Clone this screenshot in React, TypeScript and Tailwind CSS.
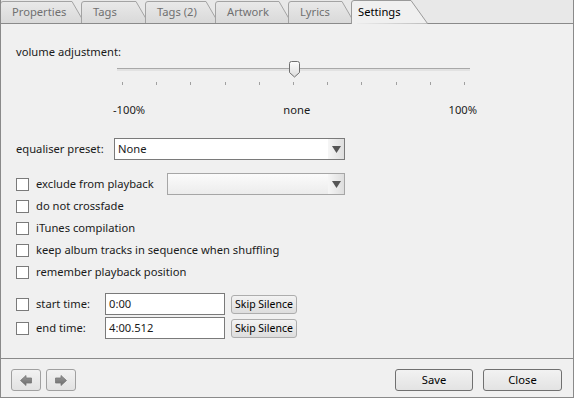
import React from 'react';

const tabs = [
  { label: 'Properties', w: 81 },
  { label: 'Tags', w: 64 },
  { label: 'Tags (2)', w: 70 },
  { label: 'Artwork', w: 73 },
  { label: 'Lyrics', w: 63 },
];

const Tab: React.FC<{ label: string; w: number }> = ({ label, w }) => (
  <div className="relative h-[23px] shrink-0" style={{ width: w }}>
    <svg className="absolute left-0 top-0 overflow-visible" width={w + 4} height={23}>
      <defs>
        <linearGradient id="tabg" x1="0" y1="0" x2="0" y2="1">
          <stop offset="0" stopColor="#e9e9e9" />
          <stop offset="1" stopColor="#d9d9d9" />
        </linearGradient>
      </defs>
      <path
        d={`M0.5,23 V4 Q0.5,1.5 3,1.5 H${w - 9} L${w + 3.5},23`}
        fill="url(#tabg)"
        stroke="#a3a3a3"
      />
    </svg>
    <span className="relative block pl-[12px] pt-[4px] leading-[16px] text-[#707070] whitespace-nowrap">{label}</span>
  </div>
);

const Checkbox = () => (
  <span className="w-[13px] h-[13px] shrink-0 bg-white border border-[#7a7a7a]" />
);

const DropArrow = () => (
  <span className="w-[16px] self-stretch flex items-center justify-center bg-gradient-to-r from-[#f6f6f6] to-[#dedede]">
    <svg width="9" height="7" viewBox="0 0 9 7">
      <path d="M0,0 H9 L4.5,7 Z" fill="#555" />
    </svg>
  </span>
);

const SkipButton = () => (
  <button className="h-[19px] w-[66px] rounded-[3px] border border-[#adadad] bg-gradient-to-b from-[#f3f3f3] to-[#dddddd] text-[10.5px] leading-[15px] text-black whitespace-nowrap">
    Skip Silence
  </button>
);

const ArrowBtn: React.FC<{ dir: 'left' | 'right' }> = ({ dir }) => (
  <button className="w-[30px] h-[22px] rounded-[3px] border border-[#a0a0a0] bg-gradient-to-b from-[#f2f2f2] to-[#e2e2e2] flex items-center justify-center">
    <svg width="12" height="11" viewBox="0 0 12 11" style={{ transform: dir === 'right' ? 'scaleX(-1)' : undefined }}>
      <defs>
        <linearGradient id="arr" x1="0" y1="0" x2="0" y2="1">
          <stop offset="0" stopColor="#9a9a9a" />
          <stop offset="1" stopColor="#6a6a6a" />
        </linearGradient>
      </defs>
      <path d="M0.5,5.5 L6,0.5 V3 H11.5 V8 H6 V10.5 Z" fill="url(#arr)" stroke="#777" strokeWidth="0.8" />
    </svg>
  </button>
);

export default function App() {
  const ticks = Array.from({ length: 11 });
  return (
    <div
      className="w-[574px] h-[398px] bg-[#f0f0f0] flex flex-col text-[11.2px] text-[#1a1a1a] border-l border-r border-b border-[#8a8a8a] overflow-hidden"
      style={{ fontFamily: '"Segoe UI", "Noto Sans", sans-serif' }}
    >
      {/* tab strip */}
      <div className="h-[23px] flex items-end bg-[#e8e8e8] -ml-px">
        {tabs.map(t => (
          <Tab key={t.label} {...t} />
        ))}
        <div className="relative h-[24px] w-[62px] -mb-px z-10 shrink-0">
          <svg className="absolute left-0 top-0 overflow-visible" width={77} height={24}>
            <path d="M0.5,24 V3 Q0.5,0.5 3,0.5 H60 L76.5,23.5" fill="#f0f0f0" stroke="#9a9a9a" />
          </svg>
          <span className="relative block pl-[7px] pt-[4px] leading-[16px] text-black">Settings</span>
        </div>
      </div>

      {/* settings panel */}
      <div className="flex-1 border-t border-b border-[#8a8a8a] pl-[15px] pt-[20px] flex flex-col">
        <div className="leading-[16px]">volume adjustment:</div>

        <div className="relative ml-[101px] w-[353px] h-[26px]">
          <div className="absolute left-0 right-0 top-[8px] h-[3px] border-t border-[#a8a8a8] bg-[#e2e2e2]" />
          <svg className="absolute left-[172px] top-[1px]" width="11" height="17" viewBox="0 0 11 17">
            <defs>
              <linearGradient id="thumb" x1="0" y1="0" x2="0" y2="1">
                <stop offset="0" stopColor="#fdfdfd" />
                <stop offset="1" stopColor="#dcdcdc" />
              </linearGradient>
            </defs>
            <path d="M0.5,2.5 Q0.5,0.5 2.5,0.5 H8.5 Q10.5,0.5 10.5,2.5 V11.5 L5.5,16 L0.5,11.5 Z" fill="url(#thumb)" stroke="#707070" />
          </svg>
          <div className="absolute left-[5px] right-[5px] top-[22px] flex justify-between">
            {ticks.map((_, i) => (
              <span key={i} className="w-px h-[3px] bg-[#a0a0a0]" />
            ))}
          </div>
        </div>

        <div className="mt-[16px] ml-[97px] w-[364px] flex justify-between leading-[16px]">
          <span>-100%</span>
          <span>none</span>
          <span>100%</span>
        </div>

        <div className="mt-[20px] flex items-center h-[22px]">
          <span className="w-[98px] whitespace-nowrap">equaliser preset:</span>
          <div className="w-[231px] h-[22px] bg-white border border-[#7a7a7a] flex items-center">
            <span className="flex-1 pl-[3px]">None</span>
            <DropArrow />
          </div>
        </div>

        <div className="mt-[13px] flex flex-col">
          <div className="h-[22px] flex items-center">
            <Checkbox />
            <span className="ml-[7px] w-[131px] whitespace-nowrap">exclude from playback</span>
            <div className="w-[178px] h-[22px] bg-gradient-to-b from-[#fbfbfb] to-[#ececec] border border-[#a6a6a6] flex justify-end">
              <DropArrow />
            </div>
          </div>
          {['do not crossfade', 'iTunes compilation', 'keep album tracks in sequence when shuffling', 'remember playback position'].map(l => (
            <div key={l} className="h-[22px] flex items-center">
              <Checkbox />
              <span className="ml-[7px] whitespace-nowrap">{l}</span>
            </div>
          ))}
        </div>

        <div className="mt-[10px] flex flex-col gap-[2px]">
          {[
            ['start time:', '0:00'],
            ['end time:', '4:00.512'],
          ].map(([l, v]) => (
            <div key={l} className="h-[22px] flex items-center">
              <Checkbox />
              <span className="ml-[7px] w-[69px]">{l}</span>
              <div className="w-[120px] h-[22px] bg-white border border-[#7a7a7a] pl-[3px] leading-[20px]">{v}</div>
              <span className="ml-[6px] flex">
                <SkipButton />
              </span>
            </div>
          ))}
        </div>
      </div>

      {/* footer */}
      <div className="h-[38px] flex items-start pt-[10px] pl-[10px] pr-[11px]">
        <div className="flex gap-[5px]">
          <ArrowBtn dir="left" />
          <ArrowBtn dir="right" />
        </div>
        <div className="ml-auto flex gap-[10px]">
          <button className="w-[78px] h-[22px] rounded-[3px] border border-[#707070] bg-gradient-to-b from-[#f2f2f2] to-[#e3e3e3] leading-[18px] text-black">Save</button>
          <button className="w-[79px] h-[22px] rounded-[3px] border border-[#707070] bg-gradient-to-b from-[#f2f2f2] to-[#e3e3e3] leading-[18px] text-black">Close</button>
        </div>
      </div>
    </div>
  );
}
